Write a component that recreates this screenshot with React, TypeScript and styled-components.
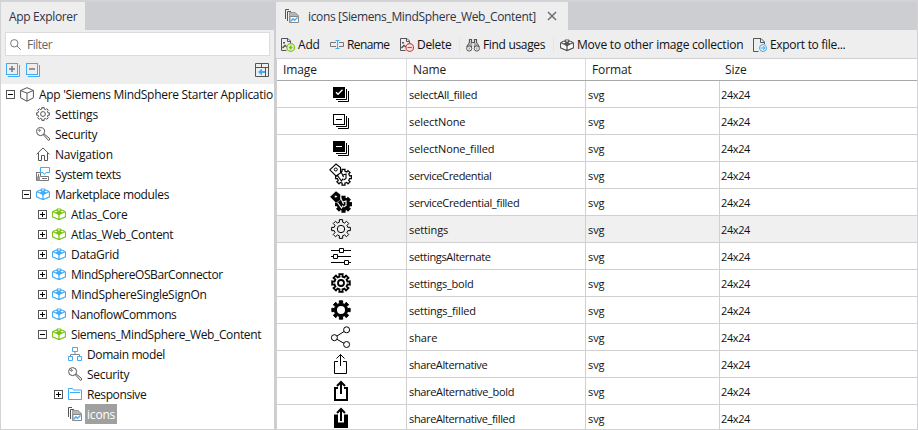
import React from 'react';
import styled, { createGlobalStyle } from 'styled-components';

const GlobalStyle = createGlobalStyle`
  * { box-sizing: border-box; }
  html, body { margin: 0; padding: 0; }
  body {
    width: 918px;
    height: 430px;
    overflow: hidden;
    font-family: 'Open Sans', 'Noto Sans', sans-serif;
    font-size: 12px;
    color: #1b1b1b;
  }
`;

const BLUE = '#41abf4';
const GREEN = '#78c410';
const GREY = '#555555';

/* ---------- layout ---------- */

const Window = styled.div`
  width: 918px;
  height: 430px;
  display: flex;
  border: 1px solid #d3d3d5;
  border-top-width: 2px;
  background: #cdced2;
`;

const Explorer = styled.aside`
  width: 273px;
  margin-right: 2px;
  display: flex;
  flex-direction: column;
  overflow: hidden;
`;

const Editor = styled.main`
  flex: 1;
  min-width: 0;
  display: flex;
  flex-direction: column;
`;

const TabStrip = styled.div`
  display: flex;
  height: 28px;
  flex: none;
`;

const Tab = styled.div<{ $width: number; $pad: number }>`
  display: flex;
  align-items: center;
  width: ${(p) => p.$width}px;
  padding-left: ${(p) => p.$pad}px;
  background: #eeeeee;
  color: #2d3348;
`;

const Text = styled.span<{ $spacing?: number }>`
  white-space: nowrap;
  line-height: 20px;
  letter-spacing: ${(p) => p.$spacing ?? -0.1}px;
`;

const TabTitle = styled(Text)`
  margin: 1px 11px 0 9px;
`;

const ExplorerTitle = styled(Text)`
  margin-top: 2px;
`;

const ExplorerTools = styled.div`
  height: 54px;
  flex: none;
  padding: 2px 4px 0;
  background: #eeeeee;
`;

const FilterBox = styled.div`
  display: flex;
  align-items: center;
  gap: 6px;
  height: 24px;
  padding: 1px 0 0 4px;
  border: 1px solid #dcdcdc;
  background: #fff;
  color: #666;
`;

const TreeButtons = styled.div`
  display: flex;
  gap: 6px;
  padding: 7px 1px 0 1px;

  svg:last-child { margin-left: auto; }
`;

const Tree = styled.div`
  flex: 1;
  overflow: hidden;
  background: #fff;
`;

const TreeRow = styled.div<{ $level: number }>`
  display: flex;
  align-items: center;
  height: 20px;
  padding-left: ${(p) => 5 + p.$level * 16}px;
  color: #111;

  svg { flex: none; }
`;

const ExpanderSlot = styled.span`
  display: flex;
  width: 9px;
  height: 9px;
  margin: 1px 5px 0 0;
`;

const TreeLabel = styled(Text)<{ $selected?: boolean }>`
  margin-left: 3px;
  padding: 1px ${(p) => (p.$selected ? 2 : 0)}px 0 2px;
  height: 20px;
  background: ${(p) => (p.$selected ? '#a0a0a0' : 'transparent')};
  color: ${(p) => (p.$selected ? '#fff' : 'inherit')};
`;

const Toolbar = styled.div`
  display: flex;
  align-items: center;
  height: 28px;
  flex: none;
  padding: 1px 0 0 5px;
  background: #eeeeee;
`;

const ToolButton = styled.div<{ $width: number; $divided?: boolean }>`
  display: flex;
  align-items: center;
  gap: 3px;
  flex: none;
  width: ${(p) => p.$width}px;
  height: 16px;
  color: #111;
  box-shadow: ${(p) => (p.$divided ? '-6px 0 0 0 #eeeeee, -7px 0 0 0 #e5e5e5' : 'none')};

  svg { flex: none; }
`;

const Table = styled.div`
  flex: 1;
  overflow: hidden;
  border-top: 1px solid #cfcfcf;
  border-left: 1px solid #cfcfcf;
  background: #fff;
`;

const columns = 'grid-template-columns: 130px 179px 134px 1fr;';

const HeaderRow = styled.div`
  display: grid;
  ${columns}
  height: 22px;
  border-bottom: 1px solid #a9a9a9;
`;

const HeaderCell = styled.div<{ $line?: boolean }>`
  display: flex;
  align-items: center;
  padding: 1px 0 0 6px;
  border-right: 1px solid ${(p) => (p.$line ? '#dcdcdc' : 'transparent')};

  &:last-child { padding-left: 5px; }
`;

const Row = styled.div<{ $active?: boolean }>`
  display: grid;
  ${columns}
  height: 27px;
  border-bottom: 1px solid #d0d0d0;
  background: ${(p) => (p.$active ? '#f0f0f0' : '#fff')};
`;

const Cell = styled.div`
  display: flex;
  align-items: center;
  padding: 2px 0 0 2px;
  font-size: 11px;
  color: #111;
  border-right: 1px solid #d0d0d0;

  &:last-child { border-right: none; padding-left: 1px; }
`;

const ImageCell = styled(Cell)`
  padding: 0 0 0 52px;
`;

/* ---------- small icons ---------- */

type IconProps = { children: React.ReactNode; w?: number; h?: number };

const Icon = ({ children, w = 14, h = 14 }: IconProps) => (
  <svg width={w} height={h} viewBox={`0 0 ${w} ${h}`} fill="none" stroke={GREY}>
    {children}
  </svg>
);

/* Outline of a cog: alternates between the tooth tip radius and the root radius. */
function gear(cx: number, cy: number, tip: number, root: number, tipHalf = 0.19, rootHalf = 0.22) {
  const pts: string[] = [];
  const put = (r: number, a: number) =>
    pts.push(`${(cx + r * Math.cos(a)).toFixed(2)} ${(cy + r * Math.sin(a)).toFixed(2)}`);
  for (let i = 0; i < 8; i++) {
    const a = (i * Math.PI) / 4;
    put(root, a - rootHalf);
    put(tip, a - tipHalf);
    put(tip, a + tipHalf);
    put(root, a + rootHalf);
  }
  return `M${pts.join('L')}Z`;
}

const Expander = ({ open }: { open: boolean }) => (
  <Icon w={9} h={9}>
    <rect x=".5" y=".5" width="8" height="8" stroke="#555" fill="#fff" />
    <path d={open ? 'M2 4.5H7' : 'M2 4.5H7M4.5 2V7'} stroke="#000" />
  </Icon>
);

const BoxIcon = () => (
  <Icon h={15}>
    <path d="M.6 3.5 7 .7l6.400 2.800v7.300L7 14.200.6 10.800ZM.6 3.500 7 6.200l6.400-2.700M7 6.200v8" />
  </Icon>
);

const CogIcon = () => (
  <Icon>
    <path d={gear(7, 7, 6.5, 5.1)} />
    <circle cx="7" cy="7" r="2.4" />
  </Icon>
);

const KeyIcon = () => (
  <Icon>
    <circle cx="4.6" cy="4.6" r="4" />
    <circle cx="3.5" cy="3.4" r=".8" />
    <path d="m7.3 7.7 5.1 5.6 1.1-.3v-1.6L8 6.8" />
  </Icon>
);

const HomeIcon = () => (
  <Icon>
    <path d="M.5 7.4 7 .9l6.5 6.5M2.5 6v7.5h3V8.5h3v5h3V6" />
  </Icon>
);

const TextsIcon = () => (
  <Icon>
    <path d="M.5 5v8.5h12V9.5H4.5V5.5H.5" stroke="#777" />
    <path d="M1 9.5h3v4H1Z" fill="#999" stroke="none" />
    <path d="M2.5 7v3M6 11.5h5" stroke="#777" />
    <path d="M4.5.5h9v5H10L8.5 7.5 7 5.5H4.5Z" stroke={BLUE} fill="#fff" />
  </Icon>
);

/* Building brick with three studs on its top face. */
const ModuleIcon = ({ color }: { color: string }) => (
  <Icon>
    <path d="M.1 4.8 2.2 3.2 4.600 2.600 5.200 1.500H8.800L9.400 2.600 11.800 3.200 13.900 4.800 7 8.200Z" fill={color} stroke="none" />
    <ellipse cx="3.900" cy="4.500" rx="1.500" ry=".75" fill="#fff" stroke="none" />
    <ellipse cx="10.100" cy="4.500" rx="1.500" ry=".75" fill="#fff" stroke="none" />
    <ellipse cx="7" cy="2.900" rx="1.200" ry=".55" fill="#fff" stroke="none" />
    <path d="M.6 4.800V9.800L7 12.500l6.400-2.700V4.800" stroke={color} strokeWidth="1.2" />
    <path d="M7 5v7.500" stroke={color} strokeWidth="1.500" />
    <path d="M1.300 6.300 6.200 8.500V11.300L1.300 9.300ZM12.700 6.300 7.800 8.500V11.300L12.700 9.300Z" fill="#fff" stroke="none" />
  </Icon>
);

const DomainIcon = () => (
  <Icon>
    <path d="M7 5v3M2.5 9V7.5h9V9" stroke="#888" />
    <path d="M4.5.5h5v4h-5ZM.5 9.5h4v4h-4ZM9.5 9.5h4v4h-4Z" stroke={BLUE} />
  </Icon>
);

const FolderIcon = () => (
  <Icon>
    <path d="M.5 12.5V1.5h4l1 1.5h8v9.5ZM2 5.5h10" stroke={BLUE} />
  </Icon>
);

const ImagesIcon = () => (
  <Icon>
    <path d="M.5 10V.5H4M2.5 12V2.5H6" />
    <path d="M4.5 3.5h5.500l3.500 3v7h-9Z" fill="#b5b5b5" stroke="#999" />
    <path d="M5 7.5h8.500v6H5Z" fill="#fff" stroke="#888" />
    <path d="m5.800 12.300 2.200-2.500 1.500 1.500 3-2.800" stroke={BLUE} strokeWidth="1.4" />
  </Icon>
);

const SearchIcon = () => (
  <Icon w={11} h={11}>
    <circle cx="4.3" cy="4.3" r="3.7" stroke="#777" />
    <path d="m7 7 3.7 3.7" stroke="#777" />
  </Icon>
);

const StackIcon = ({ plus }: { plus?: boolean }) => (
  <Icon>
    <path d="M13.5 2v11.5H2" stroke={BLUE} />
    <rect x=".5" y=".5" width="11" height="11" stroke={BLUE} />
    <path d={plus ? 'M3 6H9M6 3V9' : 'M3 6H9'} stroke="#777" strokeWidth="1.5" />
  </Icon>
);

const LocateIcon = () => (
  <Icon>
    <path d="M.5.5h13v13H.5ZM.5 4.5h13M6.5.5v4M10.5 4.5v9" />
    <path d="M3 9 7 5.5v2.500h3v2H7v2.500Z" fill={BLUE} stroke="none" />
  </Icon>
);

const CloseIcon = () => (
  <Icon w={10} h={10}>
    <path d="m1 1 8 8M9 1 1 9" stroke="#6b6d78" strokeWidth="1.5" />
  </Icon>
);

const PicturePage = () => (
  <>
    <path d="M5.500 12.500H.5V.5H7L9.500 3v3M6.500.5v3h3" />
    <path d="M2 4h2v1.500H2Z" fill={GREY} stroke="none" />
    <path d="M1.500 10 4 7.500l2 1.500" strokeWidth="1.500" />
  </>
);

const AddIcon = () => (
  <Icon>
    <PicturePage />
    <circle cx="9.7" cy="9.5" r="3.8" fill="#eee" stroke={GREEN} strokeWidth="1.2" />
    <path d="M7.8 9.500h3.800M9.700 7.600v3.800" stroke={GREEN} strokeWidth="1.700" />
  </Icon>
);

const DeleteIcon = () => (
  <Icon>
    <PicturePage />
    <circle cx="9.7" cy="9.5" r="3.8" fill="#eee" stroke="#e83b41" strokeWidth="1.2" />
    <path d="M7.5 9.5h4.4" stroke="#e83b41" strokeWidth="1.2" />
  </Icon>
);

const RenameIcon = () => (
  <Icon>
    <path d="M6 4.5H.5v4H6M9 4.5h4.500v4H9" stroke="#777" />
    <path d="M5.500 2.500h4M7.500 2.500v8M5.500 10.500h4" stroke={BLUE} />
  </Icon>
);

const FindIcon = () => (
  <Icon>
    <path d="M3.500 5V1.500h2V9M10.500 5V1.500h-2V9M3.500 4.500.7 9M10.500 4.500l2.800 4.500M5.500 4.500h3" strokeWidth="1.200" />
    <path d="M3 5h3v3H2ZM8 5h3l1 3H8Z" fill="#aaa" stroke="none" />
    <circle cx="3.200" cy="10.500" r="2.600" fill="#eee" />
    <circle cx="10.800" cy="10.500" r="2.600" fill="#eee" />
    <path d="M3.200 9.500v2M10.800 9.500v2" stroke="#888" />
  </Icon>
);

const ExportIcon = () => (
  <Icon>
    <path d="M5.500 13.500H.5V.5H8L11.500 4v2M7.500.5v4h4" />
    <circle cx="10" cy="10" r="3.5" fill="#eee" stroke={BLUE} />
    <path d="M7.800 10h4M10 8.200l1.900 1.800L10 11.800" stroke={BLUE} />
  </Icon>
);

/* ---------- 24px glyphs of the image collection ---------- */

const Stack = ({ filled, check }: { filled?: boolean; check?: boolean }) => (
  <>
    <rect x="4.5" y="5.5" width="11" height="10" fill={filled ? '#000' : 'none'} />
    <path d="M17.5 7v10.5H7M19.5 9v10.5H9" />
    <path
      d={check ? 'm7 10.3 2 2 4.500-4.500' : 'M7 10.5h6'}
      stroke={filled ? '#fff' : '#000'}
      strokeWidth={check ? 1.4 : 1}
    />
  </>
);

const Credential = ({ filled }: { filled?: boolean }) => (
  <>
    <path d={gear(14.5, 14.2, 8, 6.2)} fill={filled ? '#000' : 'none'} strokeWidth="1.2" />
    <path
      d="M.8 6.800 7 1l4.500 3.500v5.500L7 13Z"
      fill={filled ? '#000' : '#fff'}
      stroke={filled ? '#fff' : '#000'}
      strokeWidth={filled ? 0.5 : 1.1}
    />
    <circle cx="6.800" cy="6.500" r="1.500" fill={filled ? '#fff' : 'none'} />
    <path
      d="M8.500 12.500l4 5.500 1.500-2.500M11.500 7.500l3 6.500M14 12l3-1v4.500l-2.500 1.500"
      stroke={filled ? '#fff' : '#000'}
      strokeWidth="1.1"
    />
  </>
);

const ThinUpload = () => <path d="M9 9.5H5.5v12h12v-12H14M11.5 14V2.5M7.5 6.5l4-4 4 4" />;

const BoldUpload = ({ filled }: { filled?: boolean }) => (
  <>
    {filled ? (
      <path d="M5 8.5h4V16.5h6V8.5h4V22H5Z" fill="#000" stroke="none" />
    ) : (
      <path d="M9 9H6v12h12V9h-3" strokeWidth="2" />
    )}
    <path d="M12 15V3M8 7l4-4 4 4" strokeWidth="2" />
  </>
);

const glyphs: Record<string, React.ReactNode> = {
  selectAll_filled: <Stack filled check />,
  selectNone: <Stack />,
  selectNone_filled: <Stack filled />,
  serviceCredential: <Credential />,
  serviceCredential_filled: <Credential filled />,
  settings: (
    <>
      <path d={gear(12, 12, 9.5, 7, 0.17, 0.24)} />
      <circle cx="12" cy="12" r="3.7" />
    </>
  ),
  settingsAlternate: (
    <>
      <path d="M2 6.5h20M2 12.5h20M2 18.5h20" />
      <path d="M10.5 4.5h4v4h-4ZM4.5 10.5h4v4h-4ZM15.5 16.5h4v4h-4Z" fill="#fff" />
    </>
  ),
  settings_bold: (
    <>
      <path d={gear(12, 12, 9, 6.6)} strokeWidth="1.8" />
      <circle cx="12" cy="12" r="3" strokeWidth="1.8" />
    </>
  ),
  settings_filled: (
    <>
      <path d={gear(12, 12, 9.3, 6.7)} fill="#000" />
      <circle cx="12" cy="12" r="4" fill="#fff" stroke="none" />
    </>
  ),
  share: (
    <>
      <path d="m8 11 7-4.500M8 14.300l7 4" />
      <circle cx="17.6" cy="4.8" r="3" />
      <circle cx="5.4" cy="12.7" r="3" />
      <circle cx="17.6" cy="19.5" r="3" />
    </>
  ),
  shareAlternative: <ThinUpload />,
  shareAlternative_bold: <BoldUpload />,
  shareAlternative_filled: <BoldUpload filled />,
};

const nameSpacing: Record<string, number> = {
  selectAll_filled: -0.23,
  selectNone: -0.1,
  selectNone_filled: -0.1,
  serviceCredential: -0.36,
  serviceCredential_filled: -0.33,
  settingsAlternate: -0.33,
  settings_bold: -0.25,
  settings_filled: -0.2,
  shareAlternative: -0.38,
  shareAlternative_bold: -0.33,
  shareAlternative_filled: -0.36,
};

const Glyph = ({ name }: { name: string }) => (
  <svg width="24" height="24" viewBox="0 0 24 24" fill="none" stroke="#000">
    {glyphs[name]}
  </svg>
);

/* ---------- data ---------- */

type Node = { level: number; label: string; icon: React.ReactNode; open?: boolean; spacing?: number; selected?: boolean };

const blueModule = <ModuleIcon color={BLUE} />;
const greenModule = <ModuleIcon color={GREEN} />;

const nodes: Node[] = [
  { level: 0, label: "App 'Siemens MindSphere Starter Applicatio", icon: <BoxIcon />, open: true, spacing: -0.3 },
  { level: 1, label: 'Settings', icon: <CogIcon />, spacing: -0.2 },
  { level: 1, label: 'Security', icon: <KeyIcon />, spacing: -0.3 },
  { level: 1, label: 'Navigation', icon: <HomeIcon />, spacing: -0.2 },
  { level: 1, label: 'System texts', icon: <TextsIcon />, spacing: -0.42 },
  { level: 1, label: 'Marketplace modules', icon: blueModule, open: true, spacing: -0.36 },
  { level: 2, label: 'Atlas_Core', icon: greenModule, open: false, spacing: -0.25 },
  { level: 2, label: 'Atlas_Web_Content', icon: greenModule, open: false, spacing: -0.32 },
  { level: 2, label: 'DataGrid', icon: blueModule, open: false, spacing: -0.3 },
  { level: 2, label: 'MindSphereOSBarConnector', icon: blueModule, open: false, spacing: -0.42 },
  { level: 2, label: 'MindSphereSingleSignOn', icon: blueModule, open: false, spacing: -0.27 },
  { level: 2, label: 'NanoflowCommons', icon: blueModule, open: false, spacing: -0.38 },
  { level: 2, label: 'Siemens_MindSphere_Web_Content', icon: greenModule, open: true, spacing: -0.37 },
  { level: 3, label: 'Domain model', icon: <DomainIcon />, spacing: -0.4 },
  { level: 3, label: 'Security', icon: <KeyIcon />, spacing: -0.3 },
  { level: 3, label: 'Responsive', icon: <FolderIcon />, open: false, spacing: -0.4 },
  { level: 3, label: 'icons', icon: <ImagesIcon />, selected: true, spacing: -0.2 },
];

type Tool = { label: string; icon: React.ReactNode; width: number; divided?: boolean; spacing?: number };

const tools: Tool[] = [
  { label: 'Add', icon: <AddIcon />, width: 49, spacing: -0.2 },
  { label: 'Rename', icon: <RenameIcon />, width: 70, spacing: -0.6 },
  { label: 'Delete', icon: <DeleteIcon />, width: 66, spacing: -0.3 },
  { label: 'Find usages', icon: <FindIcon />, width: 94, divided: true, spacing: -0.33 },
  { label: 'Move to other image collection', icon: <ModuleIcon color={GREY} />, width: 193, divided: true, spacing: -0.21 },
  { label: 'Export to file...', icon: <ExportIcon />, width: 100, spacing: -0.31 },
];

const headers = ['Image', 'Name', 'Format', 'Size'];

export default function App() {
  return (
    <>
      <GlobalStyle />
      <Window>
        <Explorer>
          <TabStrip>
            <Tab $width={84} $pad={8}>
              <ExplorerTitle $spacing={-0.35}>App Explorer</ExplorerTitle>
            </Tab>
          </TabStrip>
          <ExplorerTools>
            <FilterBox>
              <SearchIcon />
              <Text $spacing={-0.5}>Filter</Text>
            </FilterBox>
            <TreeButtons>
              <StackIcon plus />
              <StackIcon />
              <LocateIcon />
            </TreeButtons>
          </ExplorerTools>
          <Tree>
            {nodes.map((n, i) => (
              <TreeRow key={i} $level={n.level}>
                <ExpanderSlot>{n.open !== undefined && <Expander open={n.open} />}</ExpanderSlot>
                {n.icon}
                <TreeLabel $selected={n.selected} $spacing={n.spacing}>{n.label}</TreeLabel>
              </TreeRow>
            ))}
          </Tree>
        </Explorer>
        <Editor>
          <TabStrip>
            <Tab $width={292} $pad={9}>
              <ImagesIcon />
              <TabTitle $spacing={-0.35}>icons [Siemens_MindSphere_Web_Content]</TabTitle>
              <CloseIcon />
            </Tab>
          </TabStrip>
          <Toolbar>
            {tools.map((t) => (
              <ToolButton key={t.label} $width={t.width} $divided={t.divided}>
                {t.icon}
                <Text $spacing={t.spacing}>{t.label}</Text>
              </ToolButton>
            ))}
          </Toolbar>
          <Table>
            <HeaderRow>
              {headers.map((h, i) => (
                <HeaderCell key={h} $line={i < 2}>
                  <Text>{h}</Text>
                </HeaderCell>
              ))}
            </HeaderRow>
            {Object.keys(glyphs).map((name) => (
              <Row key={name} $active={name === 'settings'}>
                <ImageCell>
                  <Glyph name={name} />
                </ImageCell>
                <Cell><Text $spacing={nameSpacing[name]}>{name}</Text></Cell>
                <Cell><Text>svg</Text></Cell>
                <Cell><Text $spacing={-0.4}>24x24</Text></Cell>
              </Row>
            ))}
          </Table>
        </Editor>
      </Window>
    </>
  );
}
